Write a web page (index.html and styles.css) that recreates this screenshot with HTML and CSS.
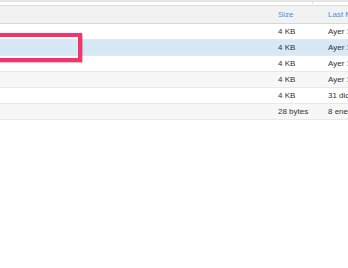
FILE: index.html
```
<!DOCTYPE html>
<html lang="es">
<head>
    <meta charset="UTF-8">
    <meta name="viewport" content="width=device-width, initial-scale=1.0">
    <title>Archivos</title>
    <link rel="stylesheet" href="styles.css">
</head>
<body>
    <div class="topbar">
        <div class="topbar-left"></div>
        <div class="topbar-right"></div>
    </div>
    <div class="files">
        <div class="row head">
            <div class="name"></div>
            <div class="size">Size</div>
            <div class="date">Last Modified</div>
        </div>
        <div class="row">
            <div class="name"></div>
            <div class="size">4 KB</div>
            <div class="date">Ayer 12:40</div>
        </div>
        <div class="row selected">
            <div class="name"></div>
            <div class="size">4 KB</div>
            <div class="date">Ayer 12:40</div>
        </div>
        <div class="row">
            <div class="name"></div>
            <div class="size">4 KB</div>
            <div class="date">Ayer 12:40</div>
        </div>
        <div class="row alt">
            <div class="name"></div>
            <div class="size">4 KB</div>
            <div class="date">Ayer 12:40</div>
        </div>
        <div class="row">
            <div class="name"></div>
            <div class="size">4 KB</div>
            <div class="date">31 dic. 2015</div>
        </div>
        <div class="row alt">
            <div class="name"></div>
            <div class="size">28 bytes</div>
            <div class="date">8 ene. 2016</div>
        </div>
        <div class="highlight"></div>
    </div>
</body>
</html>
```

FILE: styles.css
```
body {
    margin: 0;
    font-family: "Liberation Sans", Arial, sans-serif;
    font-size: 8px;
    color: #333;
    background: #fff;
    overflow: hidden;
}
.topbar {
    display: flex;
    height: 5px;
    border-bottom: 1px solid #dcdcdc;
}
.topbar-left {
    width: 312px;
    border-top: 2px solid #e6e6e6;
    border-right: 1px solid #dedede;
    height: 2px;
}
.topbar-right {
    flex: 1;
    border-top: 2px solid #e6e6e6;
}
.files {
    position: relative;
}
.row {
    display: flex;
    align-items: center;
    height: 15px;
    border-bottom: 1px solid #e8e8e8;
    white-space: nowrap;
}
.row.head {
    height: 17px;
    background: #f2f2f2;
    border-bottom: 1px solid #d8d8d8;
    color: #4a90d9;
}
.row.selected {
    background: #d7e9f7;
}
.row.alt {
    background: #f7f7f7;
}
.name {
    width: 278px;
    flex: none;
}
.size {
    width: 50px;
    flex: none;
}
.date {
    flex: none;
}
.highlight {
    position: absolute;
    left: -10px;
    top: 27px;
    width: 84px;
    height: 21px;
    border: 4px solid #f5346c;
    box-shadow: 1px 1px 1px rgba(0, 0, 0, 0.2);
}
```
